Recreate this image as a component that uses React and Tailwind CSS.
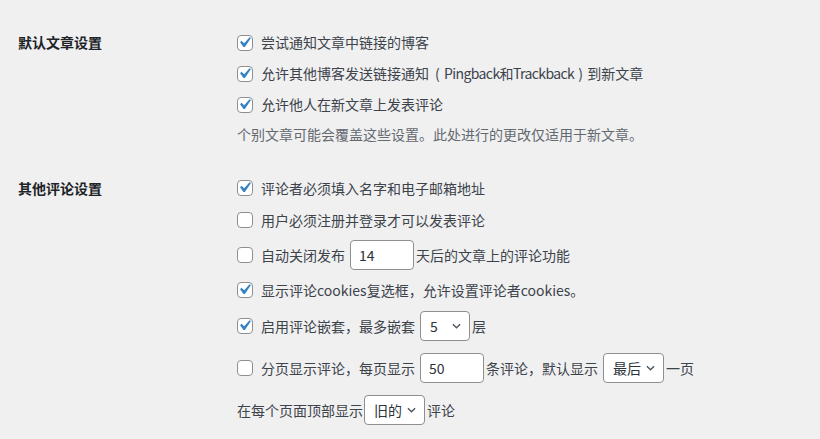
import React from "react";

const font = { fontFamily: '"Noto Sans CJK SC", "Open Sans", sans-serif' };

function Box({ checked }) {
  return (
    <span className="relative inline-block w-4 h-4 shrink-0 rounded-[4px] border border-[#8c8f94] bg-white mr-2">
      {checked && (
        <svg
          viewBox="0 0 20 20"
          className="absolute w-[21px] h-[21px] left-[-4px] top-[-4px]"
        >
          <path d="M14.83 4.89l1.34.94-5.81 8.38H9.02L5.78 9.67l1.34-1.25 2.57 2.4z" fill="#3582c4" />
        </svg>
      )}
    </span>
  );
}

function Input({ value, cls }) {
  return (
    <span className={"inline-flex items-center h-[30px] w-16 bg-white border border-[#8c8f94] rounded-[4px] px-2 text-[#2c3338] " + cls}>
      {value}
    </span>
  );
}

function Select({ value, w, cls }) {
  return (
    <span className={"inline-flex items-center justify-between h-[30px] bg-white border border-[#8c8f94] rounded-[4px] pl-[9px] pr-[8px] text-[#2c3338] " + w + " " + cls}>
      <span>{value}</span>
      <svg viewBox="0 0 10 6" className="w-[9px] h-[6px]">
        <path d="M1 1l4 4 4-4" fill="none" stroke="#50575e" strokeWidth="1.6" />
      </svg>
    </span>
  );
}

function Row({ h, children }) {
  return <div className={"flex items-center whitespace-nowrap " + h}>{children}</div>;
}

export default function App() {
  return (
    <div className="w-[820px] h-[439px] bg-[#f0f0f1] text-[14px] text-[#3c434a] overflow-hidden" style={font}>
      <div className="flex pt-[27px]">
        <div className="w-[237px] pl-[18px]">
          <div className="h-[31px] flex items-center font-bold text-[#1d2327]">默认文章设置</div>
        </div>
        <div className="flex flex-col">
          <Row h="h-[31px]"><Box checked />尝试通知文章中链接的博客</Row>
          <Row h="h-[31px]">
            <Box checked />允许其他博客发送链接通知
            <span className="inline-block w-[15px] pl-[6px]">(</span>
            <span className="tracking-[-0.6px]">Pingback和Trackback</span>
            <span className="inline-block w-[13px] pl-[4px]">)</span>
            到新文章
          </Row>
          <Row h="h-[31px]"><Box checked />允许他人在新文章上发表评论</Row>
          <Row h="h-[28px]"><span className="text-[#646970]">个别文章可能会覆盖这些设置。此处进行的更改仅适用于新文章。</span></Row>
        </div>
      </div>
      <div className="flex pt-[24px]">
        <div className="w-[237px] pl-[18px]">
          <div className="h-[32px] flex items-center font-bold text-[#1d2327]">其他评论设置</div>
        </div>
        <div className="flex flex-col">
          <Row h="h-[32px]"><Box checked />评论者必须填入名字和电子邮箱地址</Row>
          <Row h="h-[32px]"><Box />用户必须注册并登录才可以发表评论</Row>
          <Row h="h-[38px]"><Box />自动关闭发布<Input value="14" cls="ml-[5px] mr-[2px]" />天后的文章上的评论功能</Row>
          <Row h="h-[32px]"><Box checked />显示评论cookies复选框，允许设置评论者cookies。</Row>
          <Row h="h-[40px]"><Box checked />启用评论嵌套，最多嵌套<Select value="5" w="w-[50px]" cls="ml-[5px] mr-[2px]" />层</Row>
          <Row h="h-[44px]"><Box />分页显示评论，每页显示<Input value="50" cls="ml-[5px] mr-[2px]" />条评论，默认显示<Select value="最后" w="w-[61px]" cls="ml-[5px] mr-[2px]" />一页</Row>
          <Row h="h-[40px]">在每个页面顶部显示<Select value="旧的" w="w-[61px]" cls="ml-[1px] mr-[2px]" />评论</Row>
        </div>
      </div>
    </div>
  );
}
